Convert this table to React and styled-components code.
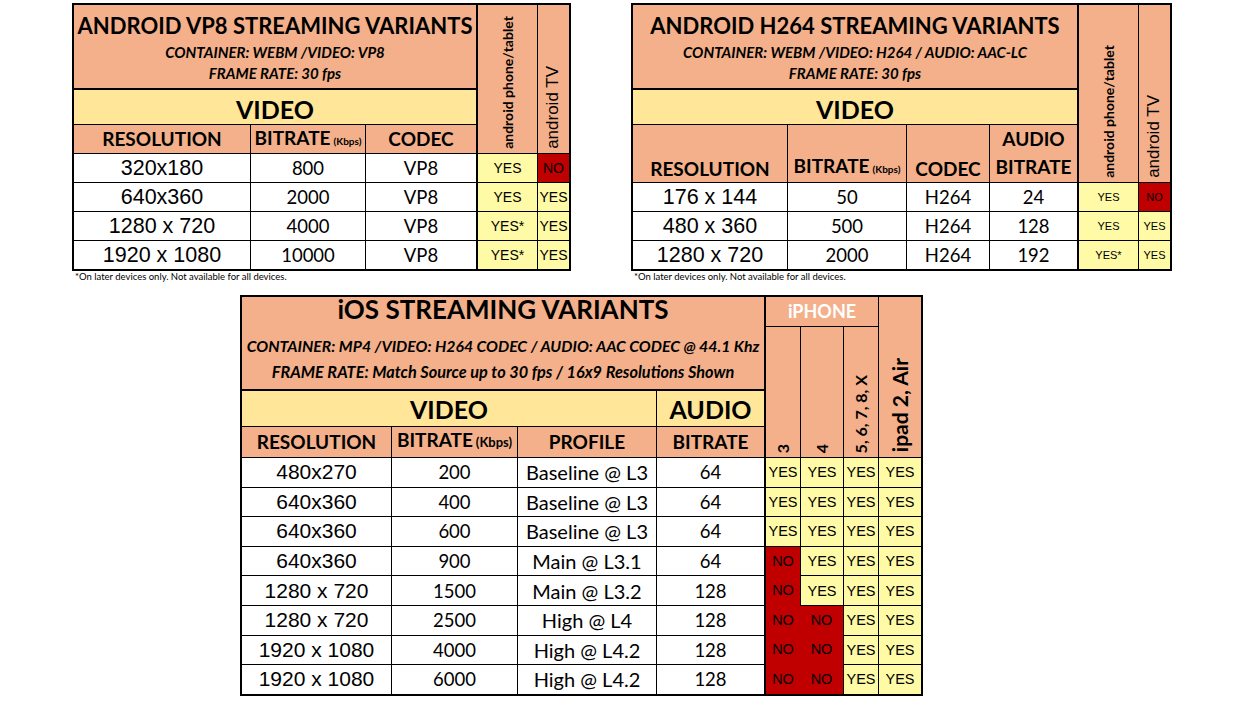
import React from 'react';
import styled, { createGlobalStyle, css } from 'styled-components';

const SALMON = '#F3B08A';
const GOLD = '#FFE699';
const PALE = '#FFFAA6';
const RED = '#C00000';
const CAL = `Lato, "Open Sans", sans-serif`;
const ARIAL = `"Liberation Sans", Arial, sans-serif`;

const Global = createGlobalStyle`
  html, body { margin: 0; padding: 0; background: #fff; }
  body { font-family: ${CAL}; color: #000; }
`;

const Page = styled.div`
  width: 1250px;
  height: 708px;
  box-sizing: border-box;
  padding-top: 3px;
  display: flex;
  flex-direction: column;
  overflow: hidden;
`;

const TopRow = styled.div`
  display: flex;
  align-items: flex-start;
  padding-left: 72px;
  gap: 60px;
`;

const BottomRow = styled.div`
  display: flex;
  padding-left: 240px;
  margin-top: 12px;
`;

const Block = styled.div`
  display: flex;
  flex-direction: column;
`;

const Note = styled.div`
  font-family: ${CAL};
  font-size: 9.5px;
  line-height: 12px;
  padding-left: 3px;
`;

const Sheet = styled.div`
  display: grid;
  grid-template-columns: ${(p) => p.$cols};
  grid-template-rows: ${(p) => p.$rows};
  gap: 1px;
  background: #000;
  border: 2px solid #000;
  width: max-content;
`;

const Cell = styled.div`
  grid-column: ${(p) => p.$c};
  grid-row: ${(p) => p.$r};
  box-sizing: border-box;
  display: flex;
  align-items: center;
  justify-content: center;
  min-width: 0;
  white-space: nowrap;
  ${(p) => p.$thickR && css`border-right: 1px solid #000;`}
  ${(p) => p.$thickB && css`border-bottom: 1px solid #000;`}
`;

const TitleCell = styled(Cell)`
  background: ${SALMON};
  flex-direction: column;
  justify-content: flex-start;
  padding-top: ${(p) => p.$pt || '6px'};
`;

const Title = styled.div`
  font-weight: 700;
  font-size: ${(p) => p.$size || '22px'};
  line-height: ${(p) => p.$lh || '30px'};
  margin-bottom: ${(p) => p.$mb || '0px'};
`;

const Sub = styled.div`
  font-weight: 700;
  font-style: italic;
  font-size: ${(p) => p.$size || '15px'};
  line-height: ${(p) => p.$lh || '21px'};
`;

const Band = styled(Cell)`
  background: ${GOLD};
  font-weight: 700;
  font-size: 25px;
  line-height: 30px;
  padding-top: ${(p) => p.$pt || '0px'};
`;

const Head = styled(Cell)`
  background: ${SALMON};
  font-weight: 700;
  font-size: 19px;
  line-height: ${(p) => p.$lh || '24px'};
  flex-direction: column;
  justify-content: ${(p) => (p.$bottom ? 'flex-end' : 'center')};
  padding-bottom: ${(p) => p.$pb || '0px'};
`;

const Small = styled.span`
  font-size: ${(p) => p.$size || '10px'};
  margin-left: 3px;
`;

const Data = styled(Cell)`
  background: #fff;
  font-family: ${(p) => (p.$cal ? CAL : ARIAL)};
  font-size: ${(p) => p.$size || '21.5px'};
`;

const Flag = styled(Cell)`
  background: ${(p) => (p.$no ? RED : PALE)};
  font-family: ${ARIAL};
  font-size: ${(p) => p.$size || '14px'};
  ${(p) => p.$joinUp && css`margin-top: -1px;`}
  ${(p) => p.$joinLeft && css`margin-left: -1px;`}
`;

const VertCell = styled(Cell)`
  background: ${SALMON};
  flex-direction: column;
  justify-content: flex-end;
  padding-bottom: ${(p) => p.$pb || '4px'};
`;

const VText = styled.span`
  writing-mode: vertical-rl;
  transform: rotate(180deg);
  font-family: ${(p) => (p.$arial ? ARIAL : CAL)};
  font-weight: ${(p) => (p.$arial ? 400 : 700)};
  font-size: ${(p) => p.$size || '14px'};
  line-height: 1.1;
`;

const IPhone = styled(Cell)`
  background: ${SALMON};
  color: #fff;
  font-weight: 700;
  font-size: 18px;
  padding-bottom: 2px;
`;

const vp8Rows = [
  ['320x180', '800', 'VP8', 'YES', 'NO'],
  ['640x360', '2000', 'VP8', 'YES', 'YES'],
  ['1280 x 720', '4000', 'VP8', 'YES*', 'YES'],
  ['1920 x 1080', '10000', 'VP8', 'YES*', 'YES'],
];

const h264Rows = [
  ['176 x 144', '50', 'H264', '24', 'YES', 'NO'],
  ['480 x 360', '500', 'H264', '128', 'YES', 'YES'],
  ['1280 x 720', '2000', 'H264', '192', 'YES*', 'YES'],
];

const iosRows = [
  ['480x270', '200', 'Baseline @ L3', '64', 'YYYY'],
  ['640x360', '400', 'Baseline @ L3', '64', 'YYYY'],
  ['640x360', '600', 'Baseline @ L3', '64', 'YYYY'],
  ['640x360', '900', 'Main @ L3.1', '64', 'NYYY'],
  ['1280 x 720', '1500', 'Main @ L3.2', '128', 'NYYY'],
  ['1280 x 720', '2500', 'High @ L4', '128', 'NNYY'],
  ['1920 x 1080', '4000', 'High @ L4.2', '128', 'NNYY'],
  ['1920 x 1080', '6000', 'High @ L4.2', '128', 'NNYY'],
];

const NOTE = '*On later devices only. Not available for all devices.';

function VP8Table() {
  return (
    <Block>
      <Sheet $cols="176px 114px 111px 59px 31px" $rows="84px 34px 28px 28px 28px 28px 28px">
        <TitleCell $c="1 / 4" $r="1" $thickR $thickB>
          <Title>ANDROID VP8 STREAMING VARIANTS</Title>
          <Sub $lh="23px">CONTAINER: WEBM /VIDEO: VP8</Sub>
          <Sub $lh="19px">FRAME RATE: 30 fps</Sub>
        </TitleCell>
        <VertCell $c="4" $r="1 / 4">
          <VText $size="14px">android phone/tablet</VText>
        </VertCell>
        <VertCell $c="5" $r="1 / 4">
          <VText $arial $size="17px">android TV</VText>
        </VertCell>
        <Band $c="1 / 4" $r="2" $thickR $pt="3px">VIDEO</Band>
        <Head $c="1" $r="3">RESOLUTION</Head>
        <Head $c="2" $r="3">
          <span>BITRATE<Small>(Kbps)</Small></span>
        </Head>
        <Head $c="3" $r="3" $thickR>CODEC</Head>
        {vp8Rows.map((row, i) => (
          <React.Fragment key={i}>
            <Data $c="1" $r={i + 4}>{row[0]}</Data>
            <Data $c="2" $r={i + 4} $cal $size="18.5px">{row[1]}</Data>
            <Data $c="3" $r={i + 4} $cal $size="18.5px" $thickR>{row[2]}</Data>
            <Flag $c="4" $r={i + 4} $no={row[3] === 'NO'}>{row[3]}</Flag>
            <Flag $c="5" $r={i + 4} $no={row[4] === 'NO'}>{row[4]}</Flag>
          </React.Fragment>
        ))}
      </Sheet>
      <Note>{NOTE}</Note>
    </Block>
  );
}

function H264Table() {
  return (
    <Block>
      <Sheet $cols="154px 118px 82px 88px 59px 31px" $rows="84px 34px 57px 28px 28px 28px">
        <TitleCell $c="1 / 5" $r="1" $thickR $thickB>
          <Title>ANDROID H264 STREAMING VARIANTS</Title>
          <Sub $lh="23px">CONTAINER: WEBM /VIDEO: H264 / AUDIO: AAC-LC</Sub>
          <Sub $lh="19px">FRAME RATE: 30 fps</Sub>
        </TitleCell>
        <VertCell $c="5" $r="1 / 4">
          <VText $size="14px">android phone/tablet</VText>
        </VertCell>
        <VertCell $c="6" $r="1 / 4">
          <VText $arial $size="17px">android TV</VText>
        </VertCell>
        <Band $c="1 / 5" $r="2" $thickR $pt="3px">VIDEO</Band>
        <Head $c="1" $r="3" $bottom $pb="1px">RESOLUTION</Head>
        <Head $c="2" $r="3" $bottom $pb="1px">
          <span>BITRATE<Small>(Kbps)</Small></span>
        </Head>
        <Head $c="3" $r="3" $bottom $pb="1px">CODEC</Head>
        <Head $c="4" $r="3" $bottom $pb="1px" $lh="28px" $thickR>
          <span>AUDIO</span>
          <span>BITRATE</span>
        </Head>
        {h264Rows.map((row, i) => (
          <React.Fragment key={i}>
            <Data $c="1" $r={i + 4}>{row[0]}</Data>
            <Data $c="2" $r={i + 4} $cal $size="18.5px">{row[1]}</Data>
            <Data $c="3" $r={i + 4} $cal $size="18.5px">{row[2]}</Data>
            <Data $c="4" $r={i + 4} $cal $size="18.5px" $thickR>{row[3]}</Data>
            <Flag $c="5" $r={i + 4} $size="11px" $no={row[4] === 'NO'}>{row[4]}</Flag>
            <Flag $c="6" $r={i + 4} $size="11px" $no={row[5] === 'NO'}>{row[5]}</Flag>
          </React.Fragment>
        ))}
      </Sheet>
      <Note>{NOTE}</Note>
    </Block>
  );
}

function IOSTable() {
  return (
    <Sheet
      $cols="149px 125px 138px 108px 34px 42px 34px 42px"
      $rows="29px 63px 35px 30px repeat(8, 28.6px)"
    >
      <TitleCell $c="1 / 5" $r="1 / 3" $thickR $thickB $pt="0px">
        <Title $size="26px" $lh="24px" $mb="11px">iOS STREAMING VARIANTS</Title>
        <Sub $size="15.8px" $lh="27px">
          CONTAINER: MP4 /VIDEO: H264 CODEC / AUDIO: AAC CODEC @ 44.1 Khz
        </Sub>
        <Sub $size="16.3px" $lh="26px">
          FRAME RATE: Match Source up to 30 fps / 16x9 Resolutions Shown
        </Sub>
      </TitleCell>
      <IPhone $c="5 / 8" $r="1">iPHONE</IPhone>
      <VertCell $c="8" $r="1 / 5" $pb="5px">
        <VText $size="21px">ipad 2, Air</VText>
      </VertCell>
      <VertCell $c="5" $r="2 / 5">
        <VText $size="16px">3</VText>
      </VertCell>
      <VertCell $c="6" $r="2 / 5">
        <VText $size="16px">4</VText>
      </VertCell>
      <VertCell $c="7" $r="2 / 5">
        <VText $size="16px">5, 6, 7, 8, X</VText>
      </VertCell>
      <Band $c="1 / 4" $r="3">VIDEO</Band>
      <Band $c="4" $r="3" $thickR>AUDIO</Band>
      <Head $c="1" $r="4">RESOLUTION</Head>
      <Head $c="2" $r="4" $pb="3px">
        <span>BITRATE<Small $size="13px">(Kbps)</Small></span>
      </Head>
      <Head $c="3" $r="4">PROFILE</Head>
      <Head $c="4" $r="4" $thickR>BITRATE</Head>
      {iosRows.map((row, i) => (
        <React.Fragment key={i}>
          <Data $c="1" $r={i + 5} $size="21px">{row[0]}</Data>
          <Data $c="2" $r={i + 5} $cal $size="18.5px">{row[1]}</Data>
          <Data $c="3" $r={i + 5} $cal $size="20px">{row[2]}</Data>
          <Data $c="4" $r={i + 5} $cal $size="18.5px" $thickR>{row[3]}</Data>
          {row[4].split('').map((f, j) => {
            const no = f === 'N';
            const above = i > 0 && iosRows[i - 1][4][j] === 'N';
            const left = j > 0 && row[4][j - 1] === 'N';
            return (
              <Flag
                key={j}
                $c={j + 5}
                $r={i + 5}
                $no={no}
                $joinUp={no && above}
                $joinLeft={no && left}
                $size="14.5px"
              >
                {no ? 'NO' : 'YES'}
              </Flag>
            );
          })}
        </React.Fragment>
      ))}
    </Sheet>
  );
}

export default function App() {
  return (
    <Page>
      <Global />
      <TopRow>
        <VP8Table />
        <H264Table />
      </TopRow>
      <BottomRow>
        <IOSTable />
      </BottomRow>
    </Page>
  );
}
